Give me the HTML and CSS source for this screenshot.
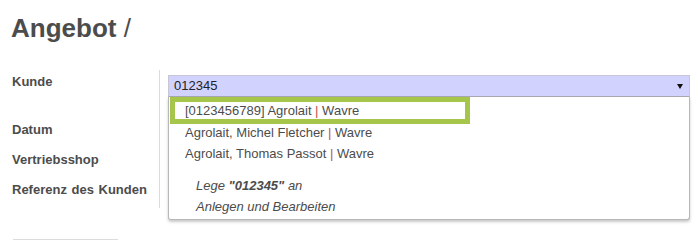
FILE: index.html
```html
<!DOCTYPE html>
<html lang="de">
<head>
<meta charset="utf-8">
<title>Angebot</title>
<link rel="stylesheet" href="styles.css">
</head>
<body>
<div class="page">
  <h1 class="title">Angebot <span class="slash">/</span></h1>
  <div class="form">
    <div class="label first">Kunde</div>
    <div class="field first">
      <div class="m2o">
        <div class="input">012345<span class="caret"></span></div>
        <div class="dropdown">
          <div class="highlight"></div>
          <ul class="items">
            <li>[0123456789] Agrolait <span class="sep">|</span> Wavre</li>
            <li>Agrolait, Michel Fletcher <span class="sep">|</span> Wavre</li>
            <li>Agrolait, Thomas Passot <span class="sep">|</span> Wavre</li>
          </ul>
          <ul class="actions">
            <li>Lege <b>"012345"</b> an</li>
            <li>Anlegen und Bearbeiten</li>
          </ul>
        </div>
      </div>
    </div>
    <div class="label">Datum</div>
    <div class="field"></div>
    <div class="label">Vertriebsshop</div>
    <div class="field"></div>
    <div class="label last">Referenz des Kunden</div>
    <div class="field last"></div>
  </div>
  <div class="tabline"></div>
</div>
</body>
</html>
```
FILE: styles.css
```css
html, body {
  margin: 0;
  padding: 0;
  background: #ffffff;
}
body {
  font-family: "Liberation Sans", Arial, sans-serif;
  font-size: 13px;
  color: #4c4c4c;
}
.page {
  width: 698px;
  height: 240px;
  overflow: hidden;
}
.title {
  margin: 0;
  padding: 13px 0 0 11px;
  font-size: 26px;
  line-height: 31px;
  font-weight: bold;
  color: #4c4c4c;
}
.slash {
  font-weight: normal;
}
.form {
  display: grid;
  grid-template-columns: 148px 1fr;
  margin: 26px 8px 0 12px;
}
.label {
  border-right: 1px solid #dcdcdc;
  font-weight: bold;
  height: 30px;
  line-height: 30px;
  word-spacing: 1px;
}
.label.first {
  height: 45px;
  line-height: 16px;
  padding-top: 4px;
  box-sizing: border-box;
}
.label.last {
  height: 33px;
}
.field {
  padding-left: 8px;
}
.field.first {
  padding-top: 5px;
}
.m2o {
  position: relative;
}
.input {
  position: relative;
  height: 20px;
  line-height: 20px;
  background: #d2d2ff;
  border: 1px solid #c6c6d6;
  border-bottom-color: #a9a9b4;
  padding-left: 5px;
  font-size: 13px;
  color: #222;
}
.caret {
  position: absolute;
  right: 6px;
  top: 8px;
  width: 0;
  height: 0;
  border-left: 3px solid transparent;
  border-right: 3px solid transparent;
  border-top: 5px solid #111;
}
.dropdown {
  position: absolute;
  top: 22px;
  left: 0;
  right: 0;
  height: 123px;
  box-sizing: border-box;
  background: #fff;
  border: 1px solid #b8b8b8;
  border-top: none;
  border-radius: 0 0 3px 3px;
  box-shadow: 0 2px 3px rgba(0, 0, 0, 0.22);
  padding-top: 3px;
}
.highlight {
  position: absolute;
  left: 1px;
  top: 0;
  width: 290px;
  height: 17px;
  border: 5px solid #a5c64b;
}
.items, .actions {
  list-style: none;
  margin: 0;
  padding: 0;
}
.items li {
  position: relative;
  height: 21.5px;
  line-height: 21.5px;
  padding-left: 16px;
  white-space: nowrap;
}
.sep {
  color: #c0564a;
}
.actions {
  margin-top: 10px;
}
.actions li {
  height: 21.5px;
  line-height: 21.5px;
  padding-left: 27px;
  font-style: italic;
}
.tabline {
  width: 105px;
  margin: 31px 0 0 13px;
  border-top: 1px solid #dcdcdc;
}
```
